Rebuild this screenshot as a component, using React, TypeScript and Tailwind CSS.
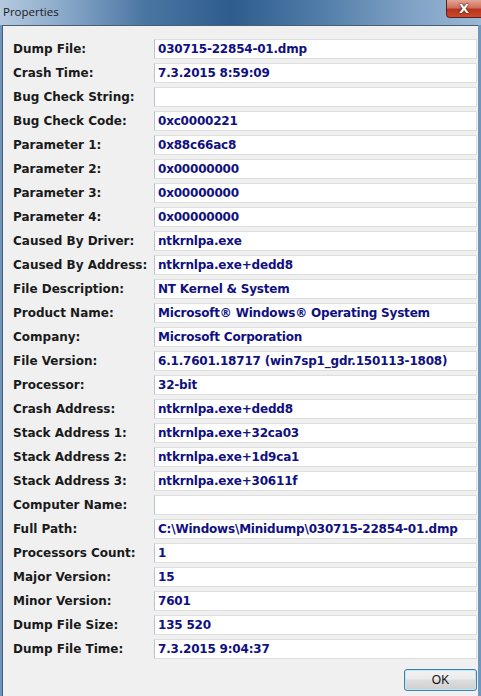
import React from 'react';

const ROWS: [string, string][] = [
  ['Dump File:', '030715-22854-01.dmp'],
  ['Crash Time:', '7.3.2015 8:59:09'],
  ['Bug Check String:', ''],
  ['Bug Check Code:', '0xc0000221'],
  ['Parameter 1:', '0x88c66ac8'],
  ['Parameter 2:', '0x00000000'],
  ['Parameter 3:', '0x00000000'],
  ['Parameter 4:', '0x00000000'],
  ['Caused By Driver:', 'ntkrnlpa.exe'],
  ['Caused By Address:', 'ntkrnlpa.exe+dedd8'],
  ['File Description:', 'NT Kernel & System'],
  ['Product Name:', 'Microsoft® Windows® Operating System'],
  ['Company:', 'Microsoft Corporation'],
  ['File Version:', '6.1.7601.18717 (win7sp1_gdr.150113-1808)'],
  ['Processor:', '32-bit'],
  ['Crash Address:', 'ntkrnlpa.exe+dedd8'],
  ['Stack Address 1:', 'ntkrnlpa.exe+32ca03'],
  ['Stack Address 2:', 'ntkrnlpa.exe+1d9ca1'],
  ['Stack Address 3:', 'ntkrnlpa.exe+30611f'],
  ['Computer Name:', ''],
  ['Full Path:', 'C:\\Windows\\Minidump\\030715-22854-01.dmp'],
  ['Processors Count:', '1'],
  ['Major Version:', '15'],
  ['Minor Version:', '7601'],
  ['Dump File Size:', '135 520'],
  ['Dump File Time:', '7.3.2015 9:04:37'],
];

export default function App() {
  return (
    <div className="w-[481px] h-[696px] overflow-hidden flex flex-col bg-[#6f96bd] font-['DejaVu_Sans',sans-serif]">
      {/* title bar */}
      <div className="h-[25px] flex items-start justify-between bg-[linear-gradient(90deg,#b4c9df_0%,#8eaccb_12%,#4a76a3_30%,#2e5c8c_48%,#4d7aa6_65%,#7ea1c4_85%,#9bb8d5_100%)]">
        <span className="pl-[3px] pt-[4px] text-[11.5px] text-[#1b1b1b] font-['Open_Sans',sans-serif] leading-[16px]">Properties</span>
        <div className="w-[36px] h-[18px] mr-[-1px] rounded-bl-[4px] border border-t-0 border-[#5a2020] bg-[linear-gradient(180deg,#e6a595_0%,#d0705c_45%,#b8341c_55%,#c94a2c_100%)] flex items-center justify-center">
          <span className="text-white text-[13px] font-bold leading-none [text-shadow:0_0_2px_#3a0d0d,0_0_1px_#3a0d0d]">X</span>
        </div>
      </div>
      <div className="flex-1 flex pl-[2px] pr-[3px]">
        <div className="flex-1 flex flex-col bg-[#f0f0f0] border-t border-l border-[#4b5d70] pl-[10px] pr-[1px] pt-[13px]">
          <div className="flex flex-col gap-[4px]">
            {ROWS.map(([label, value]) => (
              <div key={label} className="flex items-center h-[20px]">
                <span className="w-[141px] shrink-0 text-[12px] font-bold text-[#1a1a1a] leading-none">{label}</span>
                <div className="flex-1 h-[20px] bg-white border border-[#dedede] border-l-[#b9c3cf] flex items-center pl-[3px]">
                  <span className="text-[12px] font-bold text-[#10107f] leading-none whitespace-nowrap tracking-[-0.2px]">{value}</span>
                </div>
              </div>
            ))}
          </div>
          <div className="flex justify-end mt-[10px]">
            <button className="w-[73px] h-[22px] rounded-[3px] border border-[#3c7fb1] bg-[linear-gradient(180deg,#f2f2f2_0%,#ebebeb_45%,#dddddd_50%,#cfcfcf_100%)] shadow-[inset_0_0_0_1px_#bfe6f7] text-[12px] text-[#111] font-['Liberation_Sans',sans-serif]">
              OK
            </button>
          </div>
        </div>
      </div>
    </div>
  );
}
